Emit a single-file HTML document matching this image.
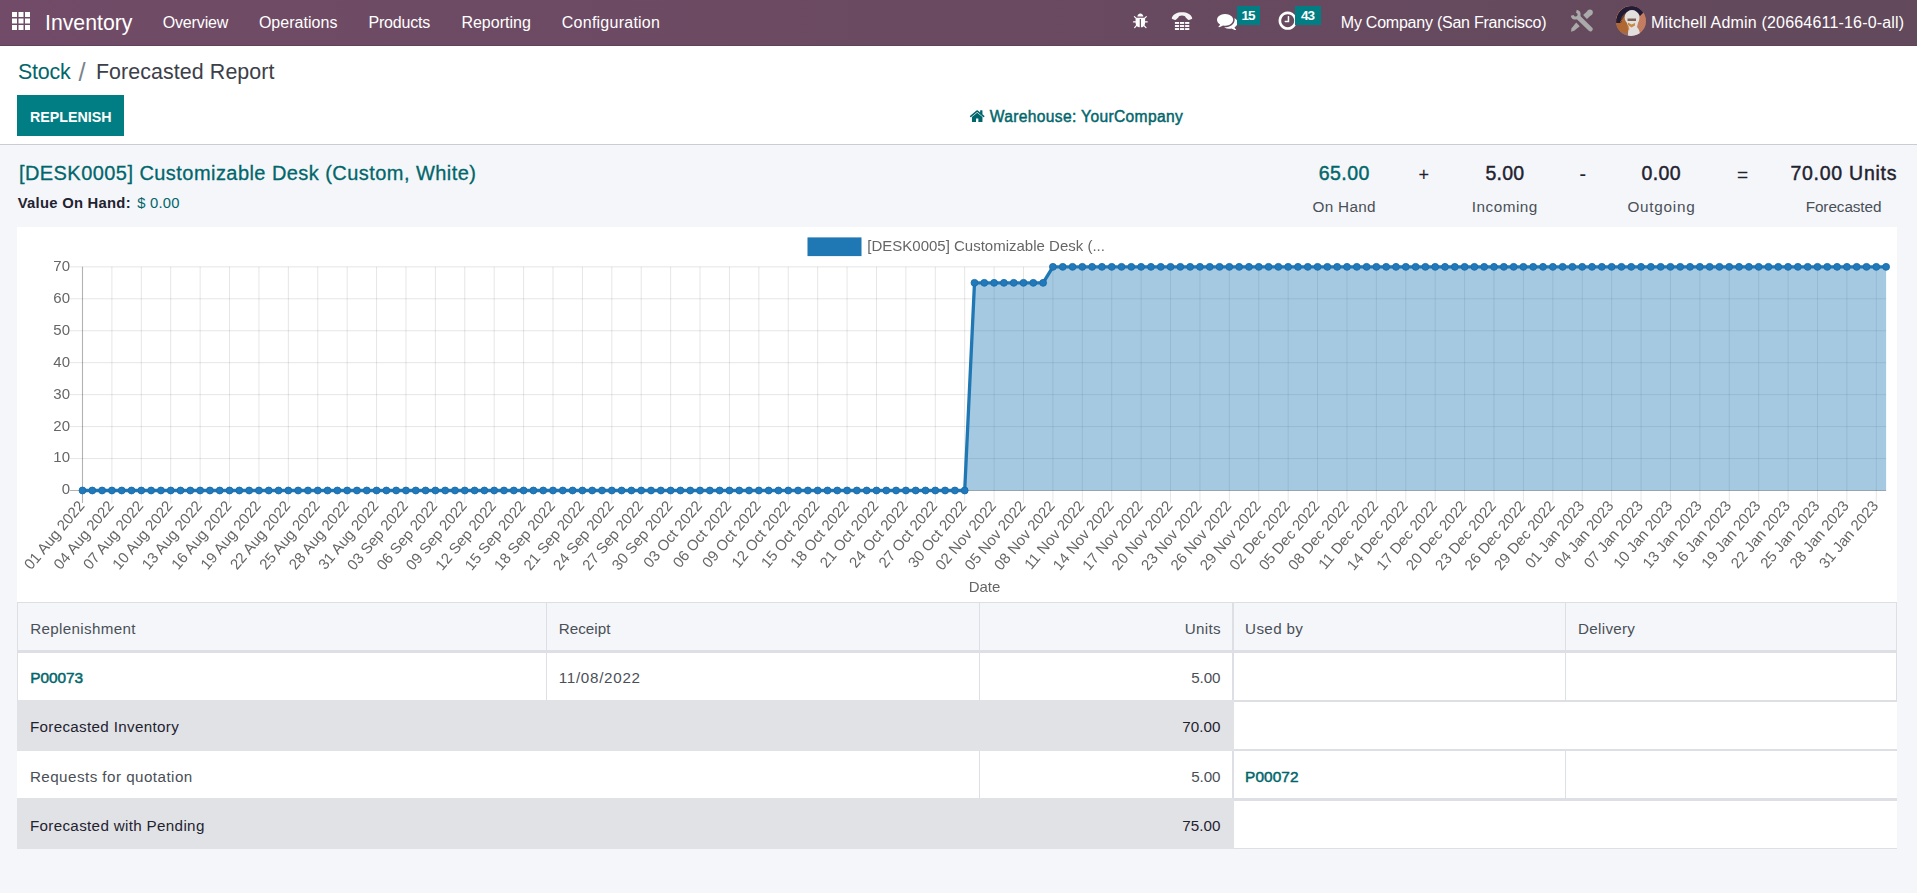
<!DOCTYPE html>
<html lang="en">
<head>
<meta charset="utf-8">
<title>Odoo - Forecasted Report</title>
<style>
html,body{margin:0;padding:0;}
body{width:1917px;height:893px;overflow:hidden;position:relative;background:#f5f6fa;font-family:"Liberation Sans",Arial,sans-serif;}
.t{position:absolute;white-space:nowrap;line-height:1;margin:0;padding:0;font-weight:normal;text-decoration:none;}
.abs{position:absolute;}
nav{position:absolute;left:0;top:0;width:1917px;height:45px;background:linear-gradient(90deg,#714b67,#62495b);border-bottom:1px solid #5f4459;}
.cp{position:absolute;left:0;top:46px;width:1917px;height:98px;background:#fff;border-bottom:1px solid #c9ccd2;}
.btn{position:absolute;left:17px;top:95px;width:107px;height:41px;background:#017e84;border-radius:0;}
.badge{position:absolute;background:#017e84;color:#fff;font-weight:bold;font-size:13.500px;line-height:20px;height:19px;text-align:center;letter-spacing:-0.8px;text-indent:-0.8px;}
.chart{position:absolute;left:17px;top:227px;width:1880px;height:375px;background:#fff;will-change:transform;}
svg text{font-family:"Liberation Sans",Arial,sans-serif;}
.cell{position:absolute;box-sizing:border-box;}
</style>
</head>
<body>

<nav>
<svg class="abs" style="left:12px;top:12px" width="18" height="18" viewBox="0 0 18 18">
<rect x="0.0" y="0.0" width="5" height="5" fill="#fff"/>
<rect x="6.5" y="0.0" width="5" height="5" fill="#fff"/>
<rect x="13.0" y="0.0" width="5" height="5" fill="#fff"/>
<rect x="0.0" y="6.5" width="5" height="5" fill="#fff"/>
<rect x="6.5" y="6.5" width="5" height="5" fill="#fff"/>
<rect x="13.0" y="6.5" width="5" height="5" fill="#fff"/>
<rect x="0.0" y="13.0" width="5" height="5" fill="#fff"/>
<rect x="6.5" y="13.0" width="5" height="5" fill="#fff"/>
<rect x="13.0" y="13.0" width="5" height="5" fill="#fff"/>
</svg>
<span class="t" style="left:45.0px;top:13.00px;font-size:21.25px;color:#fff;">Inventory</span>
<a class="t" style="left:162.7px;top:15.00px;font-size:16.0px;color:#fff;letter-spacing:-0.146px;">Overview</a>
<a class="t" style="left:258.9px;top:15.00px;font-size:16.0px;color:#fff;letter-spacing:0.036px;">Operations</a>
<a class="t" style="left:368.5px;top:15.00px;font-size:16.0px;color:#fff;letter-spacing:-0.194px;">Products</a>
<a class="t" style="left:461.4px;top:15.00px;font-size:16.0px;color:#fff;letter-spacing:0.005px;">Reporting</a>
<a class="t" style="left:561.8px;top:15.00px;font-size:16.0px;color:#fff;letter-spacing:0.245px;">Configuration</a>
<svg class="abs" style="left:1132.30px;top:12.90px" width="16.7" height="16.7" viewBox="0 0 1792 1792"><path fill="#fff" d="M1696 960q0 26-19 45t-45 19h-224q0 171-67 290l208 209q19 19 19 45t-19 45q-18 19-45 19t-45-19l-198-197q-5 5-15 13t-42 28.500-65 36.500-82 29-97 13v-896h-128v896q-51 0-101.500-13.500t-87-33-66-39-43.500-32.500l-15-14-183 207q-20 21-48 21-24 0-43-16-19-18-20.500-44.500t15.500-46.500l202-227q-58-114-58-274h-224q-26 0-45-19t-19-45 19-45 45-19h224v-294l-173-173q-19-19-19-45t19-45 45-19 45 19l173 173h844l173-173q19-19 45-19t45 19 19 45-19 45l-173 173v294h224q26 0 45 19t19 45zm-480-576h-640q0-133 93.500-226.500t226.500-93.500 226.500 93.500 93.500 226.500z"/></svg>
<svg class="abs" style="left:1171px;top:11px" width="22" height="20" viewBox="0 0 22 20">
<path d="M0.800 7.000C1.800 3.000 6.300 1.200 11 1.200s9.200 1.800 10.200 5.800c0.100 0.500-0.100 0.900-0.500 1.100l-2.600 0.800c-0.500 0.200-1.000 0-1.300-0.400L14.700 6.600c-0.100-1.300-1.700-2.100-3.700-2.100S7.400 5.300 7.300 6.600L5.200 8.500c-0.300 0.400-0.800 0.600-1.300 0.400L1.300 8.100C0.900 7.900 0.700 7.500 0.800 7.000z" fill="#f4f4f4"/>
<g fill="#fff">
<rect x="3.900" y="11" width="4.200" height="1.900"/><rect x="9" y="11" width="4.200" height="1.900"/><rect x="14.100" y="11" width="4.200" height="1.900"/>
<rect x="3.900" y="14.050" width="4.200" height="1.900"/><rect x="9" y="14.050" width="4.200" height="1.900"/><rect x="14.100" y="14.050" width="4.200" height="1.900"/>
<rect x="3.900" y="17.100" width="4.200" height="1.900"/><rect x="9" y="17.100" width="4.200" height="1.900"/><rect x="14.100" y="17.100" width="4.200" height="1.900"/>
</g></svg>
<svg class="abs" style="left:1217.00px;top:11.40px" width="20.6" height="20.6" viewBox="0 0 1792 1792"><path fill="#fff" d="M1408 768q0 139-94 257t-256.5 186.5-353.500 68.500q-86 0-176-16-124 88-278 128-36 9-86 16h-3q-11 0-20.500-8t-11.500-21q-1-3-1-6.500t.5-6.500 2-6l2.500-5t3.500-5.500 4-5 4.500-5 4-4.500q5-6 23-25t26-29.500 22.500-29 25-38.500 20.500-44q-124-72-195-177t-71-224q0-139 94-257t256.500-186.500 353.500-68.500 353.500 68.500 256.500 186.500 94 257zm384 256q0 120-71 224.500t-195 176.500q10 24 20.500 44t25 38.500 22.500 29 26 29.500 23 25q1 1 4 4.500t4.500 5 4 5 3.500 5.500l2.500 5t2 6 .5 6.500-1 6.500q-3 14-13 22t-22 7q-50-7-86-16-154-40-278-128-90 16-176 16-271 0-472-132 58 4 88 4 161 0 309-45t264-129q125-92 192-212t67-254q0-77-23-152 129 71 204 178t75 230z"/></svg>
<span class="badge" style="left:1237px;top:6px;width:23px;">15</span>
<svg class="abs" style="left:1277.40px;top:9.70px" width="21.4" height="21.4" viewBox="0 0 1792 1792"><path fill="#fff" d="M1024 544v448q0 14-9 23t-23 9h-320q-14 0-23-9t-9-23v-64q0-14 9-23t23-9h224v-352q0-14 9-23t23-9h64q14 0 23 9t9 23zm416 352q0-148-73-273t-198-198-273-73-273 73-198 198-73 273 73 273 198 198 273 73 273-73 198-198 73-273zm224 0q0 209-103 385.500t-279.500 279.500-385.500 103-385.500-103-279.500-279.500-103-385.500 103-385.500 279.500-279.500 385.500-103 385.500 103 279.500 279.500 103 385.500z"/></svg>
<span class="badge" style="left:1295px;top:6px;width:26px;">43</span>
<span class="t" style="left:1340.8px;top:15.00px;font-size:16.0px;color:#fff;letter-spacing:-0.234px;">My Company (San Francisco)</span>
<svg class="abs" style="left:1570px;top:9px" width="23" height="23" viewBox="0 0 23 23">
<g fill="none" stroke="#a9aaa9">
<path d="M6.400 2.200A3.500 3.500 0 1 1 2.200 6.400" stroke-width="3.000"/>
<path d="M9.000 9.000L20.400 20.100" stroke-width="4.600" stroke-linecap="round"/>
<path d="M20.200 3.200L15.000 8.000" stroke-width="5.600"/>
</g>
<circle cx="20.000" cy="3.400" r="2.800" fill="#a9aaa9"/>
<path d="M6.200 13.600l3.500 3.600-5.500 4.600-3.300 0.900 0.700-3.500z" fill="#a9aaa9"/>
</svg>
<svg class="abs" style="left:1616px;top:6px" width="30" height="30" viewBox="0 0 30 30">
<defs><clipPath id="av"><circle cx="15" cy="15" r="15"/></clipPath>
<pattern id="dz" width="2.500" height="2.500" patternUnits="userSpaceOnUse"><rect width="1.250" height="1.250" fill="#c2660c"/><rect x="1.250" y="1.250" width="1.250" height="1.250" fill="#c2660c"/></pattern>
<pattern id="dk" width="2.500" height="2.500" patternUnits="userSpaceOnUse"><rect width="1.250" height="1.250" fill="#1d1730"/><rect x="1.250" y="1.250" width="1.250" height="1.250" fill="#1d1730"/></pattern></defs>
<g clip-path="url(#av)">
<rect width="30" height="30" fill="#c48478"/>
<path d="M0 0h12v30H0z" fill="#9c6a58"/>
<path d="M0 4h12v22H0z" fill="url(#dz)"/>
<path d="M18 8h12v20H18z" fill="url(#dz)" opacity=".45"/>
<path d="M0 17C0 6 7 0 16 0c6 0 10 2 12 6l-4 4c-2-4-5-5-8-5C10 5 5 9 4 17z" fill="#241c36"/>
<path d="M0 14c2-5 4-8 8-10l3 4c-3 2-5 5-6 9z" fill="url(#dk)"/>
<path d="M9 9c1-3 4-5 7-5s6 2 7 5c1 3 0 6-1 8l-1 4c2 2 3 5 3 9H12c0-3 0-5 1-7l-2-6c-2-2-3-5-2-8z" fill="#e2e0de"/>
<path d="M11.500 12.500h8.500v2.600h-8.500z" fill="#5b3526" opacity=".75"/>
<path d="M12 16.500l3.500 2 3.500-1.500v2.500l-3.500 2-3.500-2.500z" fill="#c77a2c" opacity=".85"/>
<path d="M11 19.500l2 0.500 0.500 4-2-1z" fill="#c77a2c" opacity=".6"/>
</g></svg>
<span class="t" style="left:1651.1px;top:15.00px;font-size:16.0px;color:#fff;letter-spacing:0.186px;">Mitchell Admin (20664611-16-0-all)</span>
</nav>
<div class="cp"></div>
<a class="t" style="left:17.9px;top:62.00px;font-size:21.4px;color:#01666b;letter-spacing:-0.188px;">Stock</a>
<span class="t" style="left:78.6px;top:60.00px;font-size:25.5px;color:#7b838d;">/</span>
<span class="t" style="left:95.9px;top:62.00px;font-size:21.4px;color:#3c4048;letter-spacing:0.091px;">Forecasted Report</span>
<div class="btn"></div>
<span class="t" style="left:29.9px;top:110.00px;font-size:14.25px;color:#fff;font-weight:bold;">REPLENISH</span>
<svg class="abs" style="left:968.70px;top:108.10px" width="16.4" height="16.4" viewBox="0 0 1792 1792"><path fill="#01666b" d="M1472 992v480q0 26-19 45t-45 19h-384v-384h-256v384h-384q-26 0-45-19t-19-45v-480q0-1 .5-3t.5-3l575-474 575 474q1 2 1 6zm223-69l-62 74q-8 9-21 11h-3q-13 0-21-7l-692-577-692 577q-12 8-24 7-13-2-21-11l-62-74q-8-10-7-23.500t11-21.500l719-599q32-26 76-26t76 26l244 204v-195q0-14 9-23t23-9h192q14 0 23 9t9 23v408l219 182q10 8 11 21.500t-7 23.500z"/></svg>
<a class="t" style="left:989.8px;top:109.00px;font-size:15.6px;color:#01666b;letter-spacing:0.339px;-webkit-text-stroke:0.45px #01666b;">Warehouse: YourCompany</a>
<a class="t" style="left:18.9px;top:163.00px;font-size:20.0px;color:#01666b;letter-spacing:0.445px;-webkit-text-stroke:0.3px #01666b;">[DESK0005] Customizable Desk (Custom, White)</a>
<span class="t" style="left:17.8px;top:196.00px;font-size:14.8px;color:#1f2330;letter-spacing:0.264px;font-weight:bold;">Value On Hand:</span>
<span class="t" style="left:137.2px;top:196.00px;font-size:14.8px;color:#01666b;letter-spacing:0.231px;">$ 0.00</span>
<span class="t" style="left:1318.8px;top:164.00px;font-size:19.5px;color:#01666b;letter-spacing:0.425px;-webkit-text-stroke:0.45px #01666b;">65.00</span>
<span class="t" style="left:1418.5px;top:166.00px;font-size:18.1px;color:#1f2330;-webkit-text-stroke:0.15px #1f2330;">+</span>
<span class="t" style="left:1485.4px;top:164.00px;font-size:19.5px;color:#1f2330;letter-spacing:0.241px;-webkit-text-stroke:0.45px #1f2330;">5.00</span>
<span class="t" style="left:1579.4px;top:165.00px;font-size:19.55px;color:#1f2330;-webkit-text-stroke:0.15px #1f2330;">-</span>
<span class="t" style="left:1641.6px;top:164.00px;font-size:19.5px;color:#1f2330;letter-spacing:0.341px;-webkit-text-stroke:0.45px #1f2330;">0.00</span>
<span class="t" style="left:1737.1px;top:165.00px;font-size:19.15px;color:#1f2330;-webkit-text-stroke:0.15px #1f2330;">=</span>
<span class="t" style="left:1790.4px;top:164.00px;font-size:19.5px;color:#1f2330;letter-spacing:0.743px;-webkit-text-stroke:0.45px #1f2330;">70.00 Units</span>
<span class="t" style="left:1312.5px;top:199.00px;font-size:15.3px;color:#495057;letter-spacing:0.31px;">On Hand</span>
<span class="t" style="left:1471.7px;top:199.00px;font-size:15.3px;color:#495057;letter-spacing:0.517px;">Incoming</span>
<span class="t" style="left:1627.5px;top:199.00px;font-size:15.3px;color:#495057;letter-spacing:0.726px;">Outgoing</span>
<span class="t" style="left:1805.7px;top:199.00px;font-size:15.3px;color:#495057;letter-spacing:-0.082px;">Forecasted</span>
<svg class="chart" width="1880" height="375" viewBox="0 0 1880 375">
<path d="M53.0 231.55H1869.1M53.0 199.60H1869.1M53.0 167.65H1869.1M53.0 135.70H1869.1M53.0 103.75H1869.1M53.0 71.80H1869.1M53.0 39.85H1869.1M94.91 39.85V276.0M124.31 39.85V276.0M153.72 39.85V276.0M183.13 39.85V276.0M212.53 39.85V276.0M241.94 39.85V276.0M271.35 39.85V276.0M300.75 39.85V276.0M330.16 39.85V276.0M359.57 39.85V276.0M388.97 39.85V276.0M418.38 39.85V276.0M447.78 39.85V276.0M477.19 39.85V276.0M506.60 39.85V276.0M536.00 39.85V276.0M565.41 39.85V276.0M594.82 39.85V276.0M624.22 39.85V276.0M653.63 39.85V276.0M683.04 39.85V276.0M712.44 39.85V276.0M741.85 39.85V276.0M771.26 39.85V276.0M800.66 39.85V276.0M830.07 39.85V276.0M859.48 39.85V276.0M888.88 39.85V276.0M918.29 39.85V276.0M947.70 39.85V276.0M977.10 39.85V276.0M1006.51 39.85V276.0M1035.92 39.85V276.0M1065.32 39.85V276.0M1094.73 39.85V276.0M1124.13 39.85V276.0M1153.54 39.85V276.0M1182.95 39.85V276.0M1212.35 39.85V276.0M1241.76 39.85V276.0M1271.17 39.85V276.0M1300.57 39.85V276.0M1329.98 39.85V276.0M1359.39 39.85V276.0M1388.79 39.85V276.0M1418.20 39.85V276.0M1447.61 39.85V276.0M1477.01 39.85V276.0M1506.42 39.85V276.0M1535.83 39.85V276.0M1565.23 39.85V276.0M1594.64 39.85V276.0M1624.05 39.85V276.0M1653.45 39.85V276.0M1682.86 39.85V276.0M1712.27 39.85V276.0M1741.67 39.85V276.0M1771.08 39.85V276.0M1800.48 39.85V276.0M1829.89 39.85V276.0M1859.30 39.85V276.0" stroke="#000" stroke-opacity=".1" stroke-width="1" fill="none"/>
<path d="M53.0 263.50H1869.1M65.50 39.85V276.0" stroke="#000" stroke-opacity=".3" stroke-width="1.100" fill="none"/>
<polygon points="65.50,263.50 65.50,263.50 75.30,263.50 85.10,263.50 94.91,263.50 104.71,263.50 114.51,263.50 124.31,263.50 134.12,263.50 143.92,263.50 153.72,263.50 163.52,263.50 173.32,263.50 183.13,263.50 192.93,263.50 202.73,263.50 212.53,263.50 222.33,263.50 232.14,263.50 241.94,263.50 251.74,263.50 261.54,263.50 271.35,263.50 281.15,263.50 290.95,263.50 300.75,263.50 310.55,263.50 320.36,263.50 330.16,263.50 339.96,263.50 349.76,263.50 359.57,263.50 369.37,263.50 379.17,263.50 388.97,263.50 398.77,263.50 408.58,263.50 418.38,263.50 428.18,263.50 437.98,263.50 447.78,263.50 457.59,263.50 467.39,263.50 477.19,263.50 486.99,263.50 496.80,263.50 506.60,263.50 516.40,263.50 526.20,263.50 536.00,263.50 545.81,263.50 555.61,263.50 565.41,263.50 575.21,263.50 585.02,263.50 594.82,263.50 604.62,263.50 614.42,263.50 624.22,263.50 634.03,263.50 643.83,263.50 653.63,263.50 663.43,263.50 673.23,263.50 683.04,263.50 692.84,263.50 702.64,263.50 712.44,263.50 722.25,263.50 732.05,263.50 741.85,263.50 751.65,263.50 761.45,263.50 771.26,263.50 781.06,263.50 790.86,263.50 800.66,263.50 810.47,263.50 820.27,263.50 830.07,263.50 839.87,263.50 849.67,263.50 859.48,263.50 869.28,263.50 879.08,263.50 888.88,263.50 898.68,263.50 908.49,263.50 918.29,263.50 928.09,263.50 937.89,263.50 947.70,263.50 957.50,55.83 967.30,55.83 977.10,55.83 986.90,55.83 996.71,55.83 1006.51,55.83 1016.31,55.83 1026.11,55.83 1035.92,39.85 1045.72,39.85 1055.52,39.85 1065.32,39.85 1075.12,39.85 1084.93,39.85 1094.73,39.85 1104.53,39.85 1114.33,39.85 1124.13,39.85 1133.94,39.85 1143.74,39.85 1153.54,39.85 1163.34,39.85 1173.15,39.85 1182.95,39.85 1192.75,39.85 1202.55,39.85 1212.35,39.85 1222.16,39.85 1231.96,39.85 1241.76,39.85 1251.56,39.85 1261.37,39.85 1271.17,39.85 1280.97,39.85 1290.77,39.85 1300.57,39.85 1310.38,39.85 1320.18,39.85 1329.98,39.85 1339.78,39.85 1349.58,39.85 1359.39,39.85 1369.19,39.85 1378.99,39.85 1388.79,39.85 1398.60,39.85 1408.40,39.85 1418.20,39.85 1428.00,39.85 1437.80,39.85 1447.61,39.85 1457.41,39.85 1467.21,39.85 1477.01,39.85 1486.82,39.85 1496.62,39.85 1506.42,39.85 1516.22,39.85 1526.02,39.85 1535.83,39.85 1545.63,39.85 1555.43,39.85 1565.23,39.85 1575.03,39.85 1584.84,39.85 1594.64,39.85 1604.44,39.85 1614.24,39.85 1624.05,39.85 1633.85,39.85 1643.65,39.85 1653.45,39.85 1663.25,39.85 1673.06,39.85 1682.86,39.85 1692.66,39.85 1702.46,39.85 1712.27,39.85 1722.07,39.85 1731.87,39.85 1741.67,39.85 1751.47,39.85 1761.28,39.85 1771.08,39.85 1780.88,39.85 1790.68,39.85 1800.48,39.85 1810.29,39.85 1820.09,39.85 1829.89,39.85 1839.69,39.85 1849.50,39.85 1859.30,39.85 1869.10,39.85 1869.10,263.50" fill="#1f77b4" fill-opacity=".4"/>
<polyline points="65.50,263.50 75.30,263.50 85.10,263.50 94.91,263.50 104.71,263.50 114.51,263.50 124.31,263.50 134.12,263.50 143.92,263.50 153.72,263.50 163.52,263.50 173.32,263.50 183.13,263.50 192.93,263.50 202.73,263.50 212.53,263.50 222.33,263.50 232.14,263.50 241.94,263.50 251.74,263.50 261.54,263.50 271.35,263.50 281.15,263.50 290.95,263.50 300.75,263.50 310.55,263.50 320.36,263.50 330.16,263.50 339.96,263.50 349.76,263.50 359.57,263.50 369.37,263.50 379.17,263.50 388.97,263.50 398.77,263.50 408.58,263.50 418.38,263.50 428.18,263.50 437.98,263.50 447.78,263.50 457.59,263.50 467.39,263.50 477.19,263.50 486.99,263.50 496.80,263.50 506.60,263.50 516.40,263.50 526.20,263.50 536.00,263.50 545.81,263.50 555.61,263.50 565.41,263.50 575.21,263.50 585.02,263.50 594.82,263.50 604.62,263.50 614.42,263.50 624.22,263.50 634.03,263.50 643.83,263.50 653.63,263.50 663.43,263.50 673.23,263.50 683.04,263.50 692.84,263.50 702.64,263.50 712.44,263.50 722.25,263.50 732.05,263.50 741.85,263.50 751.65,263.50 761.45,263.50 771.26,263.50 781.06,263.50 790.86,263.50 800.66,263.50 810.47,263.50 820.27,263.50 830.07,263.50 839.87,263.50 849.67,263.50 859.48,263.50 869.28,263.50 879.08,263.50 888.88,263.50 898.68,263.50 908.49,263.50 918.29,263.50 928.09,263.50 937.89,263.50 947.70,263.50 957.50,55.83 967.30,55.83 977.10,55.83 986.90,55.83 996.71,55.83 1006.51,55.83 1016.31,55.83 1026.11,55.83 1035.92,39.85 1045.72,39.85 1055.52,39.85 1065.32,39.85 1075.12,39.85 1084.93,39.85 1094.73,39.85 1104.53,39.85 1114.33,39.85 1124.13,39.85 1133.94,39.85 1143.74,39.85 1153.54,39.85 1163.34,39.85 1173.15,39.85 1182.95,39.85 1192.75,39.85 1202.55,39.85 1212.35,39.85 1222.16,39.85 1231.96,39.85 1241.76,39.85 1251.56,39.85 1261.37,39.85 1271.17,39.85 1280.97,39.85 1290.77,39.85 1300.57,39.85 1310.38,39.85 1320.18,39.85 1329.98,39.85 1339.78,39.85 1349.58,39.85 1359.39,39.85 1369.19,39.85 1378.99,39.85 1388.79,39.85 1398.60,39.85 1408.40,39.85 1418.20,39.85 1428.00,39.85 1437.80,39.85 1447.61,39.85 1457.41,39.85 1467.21,39.85 1477.01,39.85 1486.82,39.85 1496.62,39.85 1506.42,39.85 1516.22,39.85 1526.02,39.85 1535.83,39.85 1545.63,39.85 1555.43,39.85 1565.23,39.85 1575.03,39.85 1584.84,39.85 1594.64,39.85 1604.44,39.85 1614.24,39.85 1624.05,39.85 1633.85,39.85 1643.65,39.85 1653.45,39.85 1663.25,39.85 1673.06,39.85 1682.86,39.85 1692.66,39.85 1702.46,39.85 1712.27,39.85 1722.07,39.85 1731.87,39.85 1741.67,39.85 1751.47,39.85 1761.28,39.85 1771.08,39.85 1780.88,39.85 1790.68,39.85 1800.48,39.85 1810.29,39.85 1820.09,39.85 1829.89,39.85 1839.69,39.85 1849.50,39.85 1859.30,39.85 1869.10,39.85" fill="none" stroke="#1f77b4" stroke-width="3.300" stroke-linejoin="round"/>
<g fill="#2079ba" stroke="#1b6ca9" stroke-width=".9">
<circle cx="65.50" cy="263.50" r="3.450"/>
<circle cx="75.30" cy="263.50" r="3.450"/>
<circle cx="85.10" cy="263.50" r="3.450"/>
<circle cx="94.91" cy="263.50" r="3.450"/>
<circle cx="104.71" cy="263.50" r="3.450"/>
<circle cx="114.51" cy="263.50" r="3.450"/>
<circle cx="124.31" cy="263.50" r="3.450"/>
<circle cx="134.12" cy="263.50" r="3.450"/>
<circle cx="143.92" cy="263.50" r="3.450"/>
<circle cx="153.72" cy="263.50" r="3.450"/>
<circle cx="163.52" cy="263.50" r="3.450"/>
<circle cx="173.32" cy="263.50" r="3.450"/>
<circle cx="183.13" cy="263.50" r="3.450"/>
<circle cx="192.93" cy="263.50" r="3.450"/>
<circle cx="202.73" cy="263.50" r="3.450"/>
<circle cx="212.53" cy="263.50" r="3.450"/>
<circle cx="222.33" cy="263.50" r="3.450"/>
<circle cx="232.14" cy="263.50" r="3.450"/>
<circle cx="241.94" cy="263.50" r="3.450"/>
<circle cx="251.74" cy="263.50" r="3.450"/>
<circle cx="261.54" cy="263.50" r="3.450"/>
<circle cx="271.35" cy="263.50" r="3.450"/>
<circle cx="281.15" cy="263.50" r="3.450"/>
<circle cx="290.95" cy="263.50" r="3.450"/>
<circle cx="300.75" cy="263.50" r="3.450"/>
<circle cx="310.55" cy="263.50" r="3.450"/>
<circle cx="320.36" cy="263.50" r="3.450"/>
<circle cx="330.16" cy="263.50" r="3.450"/>
<circle cx="339.96" cy="263.50" r="3.450"/>
<circle cx="349.76" cy="263.50" r="3.450"/>
<circle cx="359.57" cy="263.50" r="3.450"/>
<circle cx="369.37" cy="263.50" r="3.450"/>
<circle cx="379.17" cy="263.50" r="3.450"/>
<circle cx="388.97" cy="263.50" r="3.450"/>
<circle cx="398.77" cy="263.50" r="3.450"/>
<circle cx="408.58" cy="263.50" r="3.450"/>
<circle cx="418.38" cy="263.50" r="3.450"/>
<circle cx="428.18" cy="263.50" r="3.450"/>
<circle cx="437.98" cy="263.50" r="3.450"/>
<circle cx="447.78" cy="263.50" r="3.450"/>
<circle cx="457.59" cy="263.50" r="3.450"/>
<circle cx="467.39" cy="263.50" r="3.450"/>
<circle cx="477.19" cy="263.50" r="3.450"/>
<circle cx="486.99" cy="263.50" r="3.450"/>
<circle cx="496.80" cy="263.50" r="3.450"/>
<circle cx="506.60" cy="263.50" r="3.450"/>
<circle cx="516.40" cy="263.50" r="3.450"/>
<circle cx="526.20" cy="263.50" r="3.450"/>
<circle cx="536.00" cy="263.50" r="3.450"/>
<circle cx="545.81" cy="263.50" r="3.450"/>
<circle cx="555.61" cy="263.50" r="3.450"/>
<circle cx="565.41" cy="263.50" r="3.450"/>
<circle cx="575.21" cy="263.50" r="3.450"/>
<circle cx="585.02" cy="263.50" r="3.450"/>
<circle cx="594.82" cy="263.50" r="3.450"/>
<circle cx="604.62" cy="263.50" r="3.450"/>
<circle cx="614.42" cy="263.50" r="3.450"/>
<circle cx="624.22" cy="263.50" r="3.450"/>
<circle cx="634.03" cy="263.50" r="3.450"/>
<circle cx="643.83" cy="263.50" r="3.450"/>
<circle cx="653.63" cy="263.50" r="3.450"/>
<circle cx="663.43" cy="263.50" r="3.450"/>
<circle cx="673.23" cy="263.50" r="3.450"/>
<circle cx="683.04" cy="263.50" r="3.450"/>
<circle cx="692.84" cy="263.50" r="3.450"/>
<circle cx="702.64" cy="263.50" r="3.450"/>
<circle cx="712.44" cy="263.50" r="3.450"/>
<circle cx="722.25" cy="263.50" r="3.450"/>
<circle cx="732.05" cy="263.50" r="3.450"/>
<circle cx="741.85" cy="263.50" r="3.450"/>
<circle cx="751.65" cy="263.50" r="3.450"/>
<circle cx="761.45" cy="263.50" r="3.450"/>
<circle cx="771.26" cy="263.50" r="3.450"/>
<circle cx="781.06" cy="263.50" r="3.450"/>
<circle cx="790.86" cy="263.50" r="3.450"/>
<circle cx="800.66" cy="263.50" r="3.450"/>
<circle cx="810.47" cy="263.50" r="3.450"/>
<circle cx="820.27" cy="263.50" r="3.450"/>
<circle cx="830.07" cy="263.50" r="3.450"/>
<circle cx="839.87" cy="263.50" r="3.450"/>
<circle cx="849.67" cy="263.50" r="3.450"/>
<circle cx="859.48" cy="263.50" r="3.450"/>
<circle cx="869.28" cy="263.50" r="3.450"/>
<circle cx="879.08" cy="263.50" r="3.450"/>
<circle cx="888.88" cy="263.50" r="3.450"/>
<circle cx="898.68" cy="263.50" r="3.450"/>
<circle cx="908.49" cy="263.50" r="3.450"/>
<circle cx="918.29" cy="263.50" r="3.450"/>
<circle cx="928.09" cy="263.50" r="3.450"/>
<circle cx="937.89" cy="263.50" r="3.450"/>
<circle cx="947.70" cy="263.50" r="3.450"/>
<circle cx="957.50" cy="55.83" r="3.450"/>
<circle cx="967.30" cy="55.83" r="3.450"/>
<circle cx="977.10" cy="55.83" r="3.450"/>
<circle cx="986.90" cy="55.83" r="3.450"/>
<circle cx="996.71" cy="55.83" r="3.450"/>
<circle cx="1006.51" cy="55.83" r="3.450"/>
<circle cx="1016.31" cy="55.83" r="3.450"/>
<circle cx="1026.11" cy="55.83" r="3.450"/>
<circle cx="1035.92" cy="39.85" r="3.450"/>
<circle cx="1045.72" cy="39.85" r="3.450"/>
<circle cx="1055.52" cy="39.85" r="3.450"/>
<circle cx="1065.32" cy="39.85" r="3.450"/>
<circle cx="1075.12" cy="39.85" r="3.450"/>
<circle cx="1084.93" cy="39.85" r="3.450"/>
<circle cx="1094.73" cy="39.85" r="3.450"/>
<circle cx="1104.53" cy="39.85" r="3.450"/>
<circle cx="1114.33" cy="39.85" r="3.450"/>
<circle cx="1124.13" cy="39.85" r="3.450"/>
<circle cx="1133.94" cy="39.85" r="3.450"/>
<circle cx="1143.74" cy="39.85" r="3.450"/>
<circle cx="1153.54" cy="39.85" r="3.450"/>
<circle cx="1163.34" cy="39.85" r="3.450"/>
<circle cx="1173.15" cy="39.85" r="3.450"/>
<circle cx="1182.95" cy="39.85" r="3.450"/>
<circle cx="1192.75" cy="39.85" r="3.450"/>
<circle cx="1202.55" cy="39.85" r="3.450"/>
<circle cx="1212.35" cy="39.85" r="3.450"/>
<circle cx="1222.16" cy="39.85" r="3.450"/>
<circle cx="1231.96" cy="39.85" r="3.450"/>
<circle cx="1241.76" cy="39.85" r="3.450"/>
<circle cx="1251.56" cy="39.85" r="3.450"/>
<circle cx="1261.37" cy="39.85" r="3.450"/>
<circle cx="1271.17" cy="39.85" r="3.450"/>
<circle cx="1280.97" cy="39.85" r="3.450"/>
<circle cx="1290.77" cy="39.85" r="3.450"/>
<circle cx="1300.57" cy="39.85" r="3.450"/>
<circle cx="1310.38" cy="39.85" r="3.450"/>
<circle cx="1320.18" cy="39.85" r="3.450"/>
<circle cx="1329.98" cy="39.85" r="3.450"/>
<circle cx="1339.78" cy="39.85" r="3.450"/>
<circle cx="1349.58" cy="39.85" r="3.450"/>
<circle cx="1359.39" cy="39.85" r="3.450"/>
<circle cx="1369.19" cy="39.85" r="3.450"/>
<circle cx="1378.99" cy="39.85" r="3.450"/>
<circle cx="1388.79" cy="39.85" r="3.450"/>
<circle cx="1398.60" cy="39.85" r="3.450"/>
<circle cx="1408.40" cy="39.85" r="3.450"/>
<circle cx="1418.20" cy="39.85" r="3.450"/>
<circle cx="1428.00" cy="39.85" r="3.450"/>
<circle cx="1437.80" cy="39.85" r="3.450"/>
<circle cx="1447.61" cy="39.85" r="3.450"/>
<circle cx="1457.41" cy="39.85" r="3.450"/>
<circle cx="1467.21" cy="39.85" r="3.450"/>
<circle cx="1477.01" cy="39.85" r="3.450"/>
<circle cx="1486.82" cy="39.85" r="3.450"/>
<circle cx="1496.62" cy="39.85" r="3.450"/>
<circle cx="1506.42" cy="39.85" r="3.450"/>
<circle cx="1516.22" cy="39.85" r="3.450"/>
<circle cx="1526.02" cy="39.85" r="3.450"/>
<circle cx="1535.83" cy="39.85" r="3.450"/>
<circle cx="1545.63" cy="39.85" r="3.450"/>
<circle cx="1555.43" cy="39.85" r="3.450"/>
<circle cx="1565.23" cy="39.85" r="3.450"/>
<circle cx="1575.03" cy="39.85" r="3.450"/>
<circle cx="1584.84" cy="39.85" r="3.450"/>
<circle cx="1594.64" cy="39.85" r="3.450"/>
<circle cx="1604.44" cy="39.85" r="3.450"/>
<circle cx="1614.24" cy="39.85" r="3.450"/>
<circle cx="1624.05" cy="39.85" r="3.450"/>
<circle cx="1633.85" cy="39.85" r="3.450"/>
<circle cx="1643.65" cy="39.85" r="3.450"/>
<circle cx="1653.45" cy="39.85" r="3.450"/>
<circle cx="1663.25" cy="39.85" r="3.450"/>
<circle cx="1673.06" cy="39.85" r="3.450"/>
<circle cx="1682.86" cy="39.85" r="3.450"/>
<circle cx="1692.66" cy="39.85" r="3.450"/>
<circle cx="1702.46" cy="39.85" r="3.450"/>
<circle cx="1712.27" cy="39.85" r="3.450"/>
<circle cx="1722.07" cy="39.85" r="3.450"/>
<circle cx="1731.87" cy="39.85" r="3.450"/>
<circle cx="1741.67" cy="39.85" r="3.450"/>
<circle cx="1751.47" cy="39.85" r="3.450"/>
<circle cx="1761.28" cy="39.85" r="3.450"/>
<circle cx="1771.08" cy="39.85" r="3.450"/>
<circle cx="1780.88" cy="39.85" r="3.450"/>
<circle cx="1790.68" cy="39.85" r="3.450"/>
<circle cx="1800.48" cy="39.85" r="3.450"/>
<circle cx="1810.29" cy="39.85" r="3.450"/>
<circle cx="1820.09" cy="39.85" r="3.450"/>
<circle cx="1829.89" cy="39.85" r="3.450"/>
<circle cx="1839.69" cy="39.85" r="3.450"/>
<circle cx="1849.50" cy="39.85" r="3.450"/>
<circle cx="1859.30" cy="39.85" r="3.450"/>
<circle cx="1869.10" cy="39.85" r="3.450"/>
</g>
<g font-size="15" fill="#666" text-anchor="end">
<text x="53.0" y="267.40">0</text>
<text x="53.0" y="235.45">10</text>
<text x="53.0" y="203.50">20</text>
<text x="53.0" y="171.55">30</text>
<text x="53.0" y="139.60">40</text>
<text x="53.0" y="107.65">50</text>
<text x="53.0" y="75.70">60</text>
<text x="53.0" y="43.75">70</text>
</g>
<g font-size="15" fill="#666" text-anchor="end">
<text transform="translate(64.20 275.6) rotate(-50)" x="0" y="5.300">01 Aug 2022</text>
<text transform="translate(93.61 275.6) rotate(-50)" x="0" y="5.300">04 Aug 2022</text>
<text transform="translate(123.01 275.6) rotate(-50)" x="0" y="5.300">07 Aug 2022</text>
<text transform="translate(152.42 275.6) rotate(-50)" x="0" y="5.300">10 Aug 2022</text>
<text transform="translate(181.83 275.6) rotate(-50)" x="0" y="5.300">13 Aug 2022</text>
<text transform="translate(211.23 275.6) rotate(-50)" x="0" y="5.300">16 Aug 2022</text>
<text transform="translate(240.64 275.6) rotate(-50)" x="0" y="5.300">19 Aug 2022</text>
<text transform="translate(270.05 275.6) rotate(-50)" x="0" y="5.300">22 Aug 2022</text>
<text transform="translate(299.45 275.6) rotate(-50)" x="0" y="5.300">25 Aug 2022</text>
<text transform="translate(328.86 275.6) rotate(-50)" x="0" y="5.300">28 Aug 2022</text>
<text transform="translate(358.27 275.6) rotate(-50)" x="0" y="5.300">31 Aug 2022</text>
<text transform="translate(387.67 275.6) rotate(-50)" x="0" y="5.300">03 Sep 2022</text>
<text transform="translate(417.08 275.6) rotate(-50)" x="0" y="5.300">06 Sep 2022</text>
<text transform="translate(446.48 275.6) rotate(-50)" x="0" y="5.300">09 Sep 2022</text>
<text transform="translate(475.89 275.6) rotate(-50)" x="0" y="5.300">12 Sep 2022</text>
<text transform="translate(505.30 275.6) rotate(-50)" x="0" y="5.300">15 Sep 2022</text>
<text transform="translate(534.70 275.6) rotate(-50)" x="0" y="5.300">18 Sep 2022</text>
<text transform="translate(564.11 275.6) rotate(-50)" x="0" y="5.300">21 Sep 2022</text>
<text transform="translate(593.52 275.6) rotate(-50)" x="0" y="5.300">24 Sep 2022</text>
<text transform="translate(622.92 275.6) rotate(-50)" x="0" y="5.300">27 Sep 2022</text>
<text transform="translate(652.33 275.6) rotate(-50)" x="0" y="5.300">30 Sep 2022</text>
<text transform="translate(681.74 275.6) rotate(-50)" x="0" y="5.300">03 Oct 2022</text>
<text transform="translate(711.14 275.6) rotate(-50)" x="0" y="5.300">06 Oct 2022</text>
<text transform="translate(740.55 275.6) rotate(-50)" x="0" y="5.300">09 Oct 2022</text>
<text transform="translate(769.96 275.6) rotate(-50)" x="0" y="5.300">12 Oct 2022</text>
<text transform="translate(799.36 275.6) rotate(-50)" x="0" y="5.300">15 Oct 2022</text>
<text transform="translate(828.77 275.6) rotate(-50)" x="0" y="5.300">18 Oct 2022</text>
<text transform="translate(858.18 275.6) rotate(-50)" x="0" y="5.300">21 Oct 2022</text>
<text transform="translate(887.58 275.6) rotate(-50)" x="0" y="5.300">24 Oct 2022</text>
<text transform="translate(916.99 275.6) rotate(-50)" x="0" y="5.300">27 Oct 2022</text>
<text transform="translate(946.40 275.6) rotate(-50)" x="0" y="5.300">30 Oct 2022</text>
<text transform="translate(975.80 275.6) rotate(-50)" x="0" y="5.300">02 Nov 2022</text>
<text transform="translate(1005.21 275.6) rotate(-50)" x="0" y="5.300">05 Nov 2022</text>
<text transform="translate(1034.62 275.6) rotate(-50)" x="0" y="5.300">08 Nov 2022</text>
<text transform="translate(1064.02 275.6) rotate(-50)" x="0" y="5.300">11 Nov 2022</text>
<text transform="translate(1093.43 275.6) rotate(-50)" x="0" y="5.300">14 Nov 2022</text>
<text transform="translate(1122.83 275.6) rotate(-50)" x="0" y="5.300">17 Nov 2022</text>
<text transform="translate(1152.24 275.6) rotate(-50)" x="0" y="5.300">20 Nov 2022</text>
<text transform="translate(1181.65 275.6) rotate(-50)" x="0" y="5.300">23 Nov 2022</text>
<text transform="translate(1211.05 275.6) rotate(-50)" x="0" y="5.300">26 Nov 2022</text>
<text transform="translate(1240.46 275.6) rotate(-50)" x="0" y="5.300">29 Nov 2022</text>
<text transform="translate(1269.87 275.6) rotate(-50)" x="0" y="5.300">02 Dec 2022</text>
<text transform="translate(1299.27 275.6) rotate(-50)" x="0" y="5.300">05 Dec 2022</text>
<text transform="translate(1328.68 275.6) rotate(-50)" x="0" y="5.300">08 Dec 2022</text>
<text transform="translate(1358.09 275.6) rotate(-50)" x="0" y="5.300">11 Dec 2022</text>
<text transform="translate(1387.49 275.6) rotate(-50)" x="0" y="5.300">14 Dec 2022</text>
<text transform="translate(1416.90 275.6) rotate(-50)" x="0" y="5.300">17 Dec 2022</text>
<text transform="translate(1446.31 275.6) rotate(-50)" x="0" y="5.300">20 Dec 2022</text>
<text transform="translate(1475.71 275.6) rotate(-50)" x="0" y="5.300">23 Dec 2022</text>
<text transform="translate(1505.12 275.6) rotate(-50)" x="0" y="5.300">26 Dec 2022</text>
<text transform="translate(1534.53 275.6) rotate(-50)" x="0" y="5.300">29 Dec 2022</text>
<text transform="translate(1563.93 275.6) rotate(-50)" x="0" y="5.300">01 Jan 2023</text>
<text transform="translate(1593.34 275.6) rotate(-50)" x="0" y="5.300">04 Jan 2023</text>
<text transform="translate(1622.75 275.6) rotate(-50)" x="0" y="5.300">07 Jan 2023</text>
<text transform="translate(1652.15 275.6) rotate(-50)" x="0" y="5.300">10 Jan 2023</text>
<text transform="translate(1681.56 275.6) rotate(-50)" x="0" y="5.300">13 Jan 2023</text>
<text transform="translate(1710.97 275.6) rotate(-50)" x="0" y="5.300">16 Jan 2023</text>
<text transform="translate(1740.37 275.6) rotate(-50)" x="0" y="5.300">19 Jan 2023</text>
<text transform="translate(1769.78 275.6) rotate(-50)" x="0" y="5.300">22 Jan 2023</text>
<text transform="translate(1799.18 275.6) rotate(-50)" x="0" y="5.300">25 Jan 2023</text>
<text transform="translate(1828.59 275.6) rotate(-50)" x="0" y="5.300">28 Jan 2023</text>
<text transform="translate(1858.00 275.6) rotate(-50)" x="0" y="5.300">31 Jan 2023</text>
</g>
<text x="967.5" y="364.8" font-size="15" fill="#666" text-anchor="middle">Date</text>
<rect x="790.5" y="10.4" width="54" height="18.700" fill="#1f77b4"/>
<text x="850.3" y="24.0" font-size="15" fill="#666">[DESK0005] Customizable Desk (...</text>
</svg>
<div class="tbl">
<div class="cell" style="left:17px;top:602px;width:1880px;height:51px;background:#f5f6fa;border:1px solid #dedfe4;border-bottom:3px solid #dedfe4;"></div>
<div class="cell" style="left:546px;top:602px;width:1px;height:48px;background:#dedfe4;"></div>
<div class="cell" style="left:979px;top:602px;width:1px;height:48px;background:#dedfe4;"></div>
<div class="cell" style="left:1232px;top:602px;width:2px;height:48px;background:#dedfe4;"></div>
<div class="cell" style="left:1565px;top:602px;width:1px;height:48px;background:#dedfe4;"></div>
<div class="cell" style="left:17px;top:653px;width:1880px;height:48px;background:#fff;border-left:1px solid #dedfe4;border-right:1px solid #dedfe4;border-bottom:1px solid #dedfe4;"></div>
<div class="cell" style="left:546px;top:653px;width:1px;height:47px;background:#dedfe4;"></div>
<div class="cell" style="left:979px;top:653px;width:1px;height:47px;background:#dedfe4;"></div>
<div class="cell" style="left:1232px;top:653px;width:2px;height:47px;background:#dedfe4;"></div>
<div class="cell" style="left:1565px;top:653px;width:1px;height:47px;background:#dedfe4;"></div>
<div class="cell" style="left:1232px;top:700px;width:665px;height:2px;background:#dedfe4;"></div>
<div class="cell" style="left:1234px;top:702px;width:663px;height:47px;background:#fff;"></div>
<div class="cell" style="left:1232px;top:749px;width:665px;height:2px;background:#dedfe4;"></div>
<div class="cell" style="left:17px;top:700px;width:1217px;height:51px;background:#e1e2e6;"></div>
<div class="cell" style="left:17px;top:751px;width:1880px;height:47px;background:#fff;"></div>
<div class="cell" style="left:979px;top:751px;width:1px;height:47px;background:#dedfe4;"></div>
<div class="cell" style="left:1232px;top:751px;width:2px;height:47px;background:#dedfe4;"></div>
<div class="cell" style="left:1565px;top:751px;width:1px;height:47px;background:#dedfe4;"></div>
<div class="cell" style="left:1232px;top:798px;width:665px;height:3px;background:#dedfe4;"></div>
<div class="cell" style="left:1234px;top:801px;width:663px;height:47px;background:#fff;"></div>
<div class="cell" style="left:1232px;top:848px;width:665px;height:1px;background:#dedfe4;"></div>
<div class="cell" style="left:17px;top:798px;width:1217px;height:51px;background:#e1e2e6;"></div>
</div>
<span class="t" style="left:30.2px;top:621.00px;font-size:15.2px;color:#495057;letter-spacing:0.335px;">Replenishment</span>
<span class="t" style="left:558.7px;top:621.00px;font-size:15.2px;color:#495057;letter-spacing:0.045px;">Receipt</span>
<span class="t" style="left:1184.7px;top:621.00px;font-size:15.2px;color:#495057;letter-spacing:0.32px;">Units</span>
<span class="t" style="left:1245.1px;top:621.00px;font-size:15.2px;color:#495057;letter-spacing:0.359px;">Used by</span>
<span class="t" style="left:1578.1px;top:621.00px;font-size:15.2px;color:#495057;letter-spacing:0.284px;">Delivery</span>
<a class="t" style="left:30.2px;top:670.00px;font-size:15.4px;color:#01666b;letter-spacing:-0.058px;-webkit-text-stroke:0.5px #01666b;">P00073</a>
<span class="t" style="left:558.7px;top:670.00px;font-size:15.2px;color:#4a4f57;letter-spacing:0.718px;">11/08/2022</span>
<span class="t" style="left:1191.2px;top:670.00px;font-size:15.2px;color:#4a4f57;letter-spacing:-0.067px;">5.00</span>
<span class="t" style="left:29.9px;top:719.00px;font-size:15.2px;color:#1f2330;letter-spacing:0.326px;">Forecasted Inventory</span>
<span class="t" style="left:1182.2px;top:719.00px;font-size:15.2px;color:#1f2330;letter-spacing:0.09px;">70.00</span>
<span class="t" style="left:29.9px;top:769.00px;font-size:15.2px;color:#4a4f57;letter-spacing:0.455px;">Requests for quotation</span>
<span class="t" style="left:1191.2px;top:769.00px;font-size:15.2px;color:#4a4f57;letter-spacing:-0.067px;">5.00</span>
<a class="t" style="left:1245.1px;top:769.00px;font-size:15.4px;color:#01666b;letter-spacing:0.062px;-webkit-text-stroke:0.5px #01666b;">P00072</a>
<span class="t" style="left:29.9px;top:818.00px;font-size:15.2px;color:#1f2330;letter-spacing:0.331px;">Forecasted with Pending</span>
<span class="t" style="left:1182.2px;top:818.00px;font-size:15.2px;color:#1f2330;letter-spacing:0.09px;">75.00</span>
</body>
</html>
